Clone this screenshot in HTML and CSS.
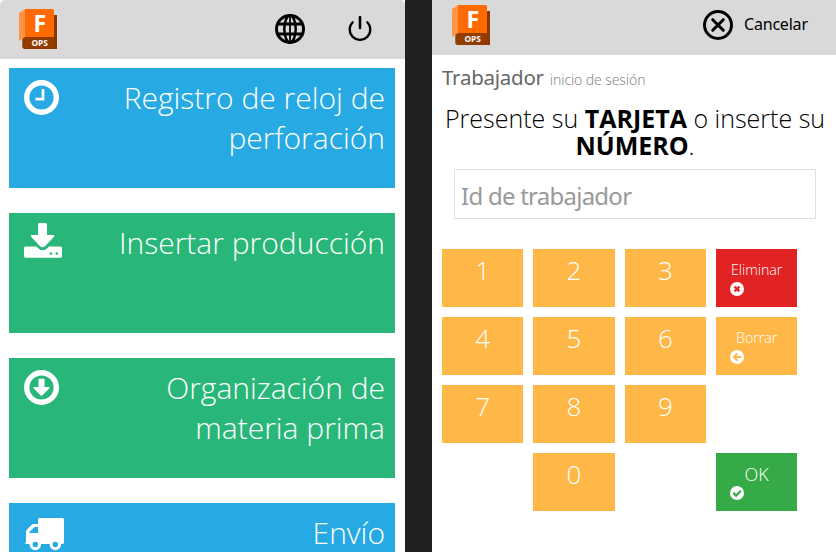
FILE: index.html
```
<!DOCTYPE html>
<html lang="es">
<head>
<meta charset="utf-8">
<title>Fusion Operations</title>
<link rel="stylesheet" href="styles.css">
</head>
<body>
<svg class="defs" aria-hidden="true">
  <symbol id="logo" viewBox="0 0 38 40">
    <path fill="#933c00" d="M33 6h5v34H5L3.300 38.500V28H33z"/>
    <path fill="#7a3100" d="M35 6h3v34h-3z" opacity=".35"/>
    <path fill="#ff9346" d="M0 4 6 0v28L0 32z"/>
    <path fill="#ff6b00" d="M6 0h27.500q1.500 0 1.500 1.500V28H6z"/>
  </symbol>
</svg>
<div class="app">
  <section class="menu">
    <header class="bar menu-bar">
      <div class="logo"><svg width="38" height="40"><use href="#logo"/></svg><b class="logo-f">F</b><span class="logo-ops">OPS</span></div>
      <div class="actions">
        <svg width="30" height="30" viewBox="0 0 30 30" fill="none" stroke="#000" stroke-width="3"><circle cx="15" cy="15" r="13.500"/><ellipse cx="15" cy="15" rx="5.700" ry="13.500" stroke-width="2.500"/><path d="M15 1v28" stroke-width="1.800"/><path d="M2 10h26M2 20h26" stroke-width="2.800"/></svg>
        <svg width="24" height="25" viewBox="0 0 24 25" fill="none" stroke="#000" stroke-width="2.300" stroke-linecap="round"><path d="M12 1.200v10.800" stroke-width="2.600"/><path d="M4.700 6.300a10.300 10.300 0 1 0 14.600 0"/></svg>
      </div>
    </header>
    <div class="tiles">
      <div class="tile blue">
        <svg width="36" height="36" viewBox="0 0 36 36" fill="none" stroke="#fff"><circle cx="17.500" cy="17.500" r="14.800" stroke-width="5.400"/><path d="M19 9v10.200h-7.500" stroke-width="2.700"/></svg>
        <span>Registro de reloj de perforación</span>
      </div>
      <div class="tile green">
        <svg width="38" height="36" viewBox="0 0 38 36"><path fill="#fff" d="M15.500 0h6q1.500 0 1.500 1.500V12h6.200q1.800.2.600 1.900L21 23.200q-2.500 2-5 0L7.300 13.900Q6.200 12.200 8 12h6V1.500Q14 0 15.500 0zM1.500 23.500h11l2 2q4.300 3.700 8.500 0l2-2h11.500q1.500 0 1.500 1.500v8q0 1.700-1.500 1.700h-35Q0 34.700 0 33v-8q0-1.500 1.500-1.500z"/><circle cx="27" cy="30.500" r="1.300" fill="#29b779"/><circle cx="32.800" cy="30.500" r="1.300" fill="#29b779"/></svg>
        <span>Insertar producción</span>
      </div>
      <div class="tile green">
        <svg width="36" height="36" viewBox="0 0 36 36"><circle cx="17.500" cy="17.500" r="14.800" stroke="#fff" stroke-width="5.400" fill="none"/><path fill="#fff" d="M14.500 8.800h6V17H25q1.200.2.400 1.200l-7.900 8-7.900-8Q8.800 17.200 10 17h4.500z"/></svg>
        <span>Organización de materia prima</span>
      </div>
      <div class="tile blue">
        <svg class="truck" width="40" height="34" viewBox="0 0 40 34"><path fill="#fff" fill-rule="evenodd" d="M14.500 0h23q1.500 0 1.500 1.500v23q0 1.500-2 1.500H1q-1.500-.5 0-2.300V14q0-1.500 1-2.600l4-4Q7 6 9 6h4V1.500Q13 0 14.500 0zM13 9H9.500l-5.200 5.300V15H13z"/><g fill="#27a9e3" stroke="#fff" stroke-width="3"><circle cx="10.300" cy="26.500" r="4.200"/><circle cx="30.300" cy="26.500" r="4.200"/></g></svg>
        <span>Envío</span>
      </div>
    </div>
  </section>
  <section class="login">
    <header class="bar login-bar">
      <div class="logo"><svg width="38" height="40"><use href="#logo"/></svg><b class="logo-f">F</b><span class="logo-ops">OPS</span></div>
      <div class="cancel">
        <svg width="30" height="30" viewBox="0 0 30 30" fill="none" stroke="#000" stroke-linecap="round"><circle cx="15" cy="15" r="13.500" stroke-width="3"/><path d="m9.700 9.700 10.600 10.600m0-10.600L9.700 20.300" stroke-width="3"/></svg>
        <span>Cancelar</span>
      </div>
    </header>
    <h1 class="title"><span>Trabajador</span><small>inicio de sesión</small></h1>
    <p class="prompt">Presente su <b>TARJETA</b> o inserte su <b>NÚMERO</b>.</p>
    <input class="worker" type="text" placeholder="Id de trabajador">
    <div class="keypad">
      <div class="key">1</div><div class="key">2</div><div class="key">3</div>
      <div class="key word red"><span>Eliminar</span><svg viewBox="0 0 14 14"><circle cx="7" cy="7" r="7" fill="#fff"/><path d="m4.600 4.600 4.800 4.800m0-4.800L4.600 9.400" stroke="#e12323" stroke-width="2.200"/></svg></div>
      <div class="key">4</div><div class="key">5</div><div class="key">6</div>
      <div class="key word"><span>Borrar</span><svg viewBox="0 0 14 14"><circle cx="7" cy="7" r="7" fill="#fff"/><path d="M7.500 3.300 3.800 7l3.700 3.700M4 7h7.300" fill="none" stroke="#ffb848" stroke-width="1.900"/></svg></div>
      <div class="key">7</div><div class="key">8</div><div class="key">9</div>
      <div class="key zero">0</div>
      <div class="key word ok"><span>OK</span><svg viewBox="0 0 14 14"><circle cx="7" cy="7" r="7" fill="#fff"/><path d="m3.300 6.800 2.800 2.800 4.800-4.800" fill="none" stroke="#35aa47" stroke-width="2.200"/></svg></div>
    </div>
  </section>
</div>
</body>
</html>
```
FILE: styles.css
```
* { box-sizing: border-box; }
body { margin: 0; background: #fff; font-family: "Open Sans", sans-serif; }
.defs { position: absolute; width: 0; height: 0; }
.app { display: grid; grid-template-columns: 405px 404px; column-gap: 27px; width: 836px; height: 552px; overflow: hidden; background: #202020; }
.menu, .login { background: #fff; height: 552px; overflow: hidden; }
.bar { display: flex; justify-content: space-between; background: #d9d9d9; }
.menu-bar { height: 59px; padding: 9px 33px 0 19px; border-radius: 5px 5px 0 0; }
.login-bar { height: 55px; padding: 5px 28px 0 20px; }
.logo { position: relative; width: 38px; height: 40px; color: #fff; }
.logo svg { display: block; }
.logo-f { position: absolute; left: 14.500px; top: 2px; font-size: 23px; line-height: 24px; }
.logo-ops { position: absolute; left: 12.500px; top: 28px; font-size: 8.300px; line-height: 12px; font-weight: 700; }
.actions { display: flex; gap: 43px; padding-top: 5px; }
.actions svg + svg { margin-top: 2px; }
.tiles { display: flex; flex-direction: column; gap: 25px; padding: 9px 10px 0 9px; }
.tile { display: flex; justify-content: space-between; flex: none; height: 120px; padding: 10px 10px 0 15px; color: #fff; font-size: 30px; font-weight: 300; line-height: 40px; text-align: right; }
.tile svg { flex: none; margin-top: 2px; }
.tile .truck { margin: 5px 0 0 1px; }
.tile span { width: 285px; }
.green svg { margin-top: 0; }
.green:nth-child(3) svg { margin-top: 2px; }
.blue { background: #27a9e3; }
.green { background: #29b779; }
.cancel { display: flex; gap: 11px; padding-top: 5px; }
.cancel span { width: 64px; font-family: "Noto Sans", sans-serif; font-size: 16px; line-height: 28px; white-space: nowrap; letter-spacing: -.2px; }
.title { display: flex; align-items: baseline; gap: 6px; margin: 7px 0 0 10px; height: 30px; font-family: "Noto Sans", sans-serif; font-size: 20.500px; line-height: 30px; font-weight: 400; letter-spacing: -.25px; color: #666; }
.title small { font-size: 14px; font-weight: 300; letter-spacing: -.1px; color: #888; white-space: nowrap; }
.prompt { margin: 13px 0 0 1px; width: 404px; height: 54px; font-size: 25px; font-weight: 300; line-height: 27px; text-align: center; color: #000; }
.prompt b { font-weight: 700; }
.worker { display: block; margin: 10px 0 0 22px; width: 362px; height: 50px; padding: 3px 6px 0; border: 1px solid #e0e0e0; font: 24px "Noto Sans", sans-serif; letter-spacing: -.75px; }
.worker::placeholder { color: #999; opacity: 1; }
.keypad { display: grid; grid-template-columns: repeat(4, 81.250px); grid-auto-rows: 58px; gap: 10px 10.100px; margin: 30px 0 0 10px; }
.key { background: #ffb848; color: #fff; font-size: 26px; line-height: 42px; font-weight: 300; text-align: center; }
.zero { grid-column: 2; grid-row: 4; }
.word { grid-column: 4; display: flex; flex-direction: column; padding: 11px 0 0 14px; font-size: 14.200px; line-height: 20px; }
.word span { padding-right: 14px; }
.word svg { width: 14px; height: 14px; margin-top: 2px; }
.red { background: #e12323; }
.ok { grid-row: 4; background: #35aa47; font-size: 18px; }
```
